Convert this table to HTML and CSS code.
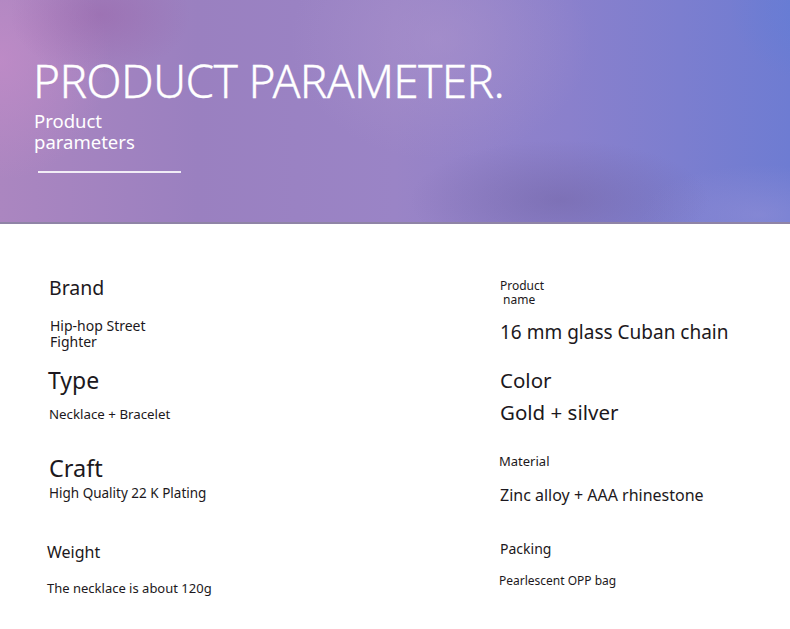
FILE: index.html
```html
<!DOCTYPE html>
<html>
<head>
<meta charset="utf-8">
<link rel="stylesheet" href="styles.css">
</head>
<body>
<header class="hero">
  <h1 class="hero-title">PRODUCT PARAMETER.</h1>
  <p class="hero-sub">Product<br>parameters</p>
  <div class="hero-rule"></div>
</header>
<main class="params">
  <section class="col col-left">
    <div class="label brand">Brand</div>
    <div class="value v-brand">Hip-hop Street<br>Fighter</div>
    <div class="label type">Type</div>
    <div class="value v-type">Necklace + Bracelet</div>
    <div class="label craft">Craft</div>
    <div class="value v-craft">High Quality 22 K Plating</div>
    <div class="label weight">Weight</div>
    <div class="value v-weight">The necklace is about 120g</div>
  </section>
  <section class="col col-right">
    <div class="label pname">Product<br>&nbsp;name</div>
    <div class="value v-pname">16 mm glass Cuban chain</div>
    <div class="label color">Color</div>
    <div class="value v-color">Gold + silver</div>
    <div class="label material">Material</div>
    <div class="value v-material">Zinc alloy + AAA rhinestone</div>
    <div class="label packing">Packing</div>
    <div class="value v-packing">Pearlescent OPP bag</div>
  </section>
</main>
</body>
</html>
```
FILE: styles.css
```css
html, body {
  margin: 0;
  padding: 0;
  background: #ffffff;
}
body {
  width: 790px;
  height: 629px;
  overflow: hidden;
  font-family: "Noto Sans", "Open Sans", sans-serif;
  color: #1c1820;
}
.hero {
  height: 222px;
  border-bottom: 2px solid #8f84a6;
  box-sizing: content-box;
  padding-left: 33px;
  display: flex;
  flex-direction: column;
  background:
    radial-gradient(ellipse 90px 60px at 100px 15px, rgba(150, 95, 165, 0.45), rgba(150, 95, 165, 0) 100%),
    radial-gradient(ellipse 150px 60px at 560px 200px, rgba(105, 90, 150, 0.4), rgba(105, 90, 150, 0) 100%),
    radial-gradient(ellipse 120px 80px at 850px 10px, rgba(95, 125, 215, 0.8), rgba(95, 125, 215, 0) 100%),
    radial-gradient(ellipse 150px 120px at 440px 40px, rgba(175, 150, 205, 0.5), rgba(175, 150, 205, 0) 100%),
    radial-gradient(ellipse 110px 120px at 0px 60px, rgba(195, 140, 200, 0.75), rgba(195, 140, 200, 0) 100%),
    radial-gradient(ellipse 120px 50px at 760px 215px, rgba(150, 145, 215, 0.5), rgba(150, 145, 215, 0) 100%),
    linear-gradient(90deg, #ab86c0 0%, #9a80c0 25%, #9a84c6 50%, #8a80cc 72%, #6e7cd2 100%);
}
.hero-title {
  margin: 57px 0 0 0;
  font-weight: 300;
  font-size: 46px;
  line-height: 46px;
  color: #ffffff;
  letter-spacing: -0.7px;
  -webkit-text-stroke: 0.3px #ffffff;
}
.hero-sub {
  margin: 7px 0 0 1px;
  font-size: 18.5px;
  line-height: 21px;
  color: #ffffff;
  font-weight: 400;
}
.hero-rule {
  margin: 19px 0 0 5px;
  width: 143px;
  height: 2px;
  background: rgba(255, 255, 255, 0.85);
}
.params {
  display: grid;
  grid-template-columns: 452px 1fr;
  padding-left: 48px;
}
.col {
  display: flex;
  flex-direction: column;
  align-items: flex-start;
}
.label, .value {
  white-space: nowrap;
}
/* left column */
.brand { margin-top: 52px; margin-left: 1px; font-size: 19.5px; line-height: 24px; }
.v-brand { margin-top: 18px; margin-left: 2px; font-size: 14px; line-height: 16px; }
.type { margin-top: 16px; font-size: 23px; line-height: 28px; }
.v-type { margin-top: 12px; margin-left: 1px; font-size: 13.3px; line-height: 16px; }
.craft { margin-top: 32px; margin-left: 1px; font-size: 23.5px; line-height: 28px; }
.v-craft { margin-top: 2px; margin-left: 1px; font-size: 13.5px; line-height: 18px; }
.weight { margin-top: 40px; margin-left: -1px; font-size: 16px; line-height: 20px; }
.v-weight { margin-top: 17px; margin-left: -1px; font-size: 13px; line-height: 18px; }
/* right column */
.pname { margin-top: 55px; font-size: 12px; line-height: 14px; }
.v-pname { margin-top: 13px; font-size: 19px; line-height: 24px; }
.color { margin-top: 24px; font-size: 20.5px; line-height: 24px; }
.v-color { margin-top: 8px; font-size: 20.5px; line-height: 24px; }
.material { margin-top: 29px; margin-left: -1px; font-size: 13px; line-height: 16px; }
.v-material { margin-top: 16px; font-size: 16px; line-height: 20px; }
.packing { margin-top: 35px; font-size: 14px; line-height: 18px; }
.v-packing { margin-top: 15px; margin-left: -1px; font-size: 12px; line-height: 16px; }
```
